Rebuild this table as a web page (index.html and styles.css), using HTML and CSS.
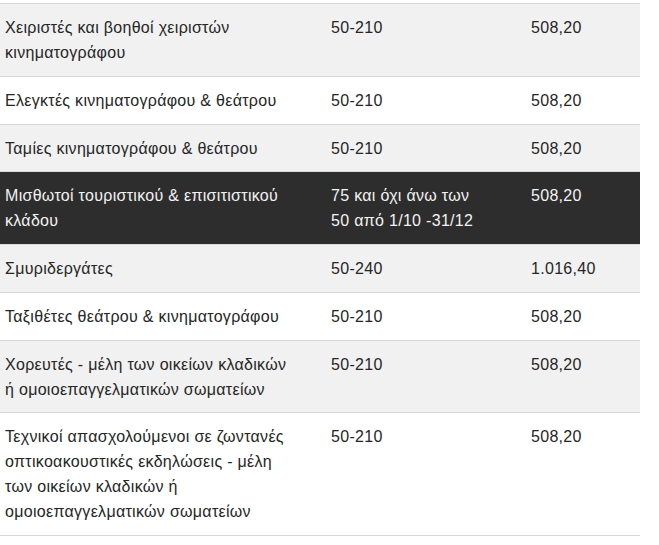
FILE: index.html
```html
<!DOCTYPE html>
<html lang="el">
<head>
<meta charset="utf-8">
<link rel="stylesheet" href="styles.css">
</head>
<body>
<table class="rates">
  <colgroup>
    <col class="c-job">
    <col class="c-days">
    <col class="c-amount">
  </colgroup>
  <tbody>
    <tr class="alt">
      <td class="job">Χειριστές και βοηθοί χειριστών κινηματογράφου</td>
      <td class="days">50-210</td>
      <td class="amount">508,20</td>
    </tr>
    <tr>
      <td class="job">Ελεγκτές κινηματογράφου &amp; θεάτρου</td>
      <td class="days">50-210</td>
      <td class="amount">508,20</td>
    </tr>
    <tr class="alt">
      <td class="job">Ταμίες κινηματογράφου &amp; θεάτρου</td>
      <td class="days">50-210</td>
      <td class="amount">508,20</td>
    </tr>
    <tr class="hl">
      <td class="job">Μισθωτοί τουριστικού &amp; επισιτιστικού κλάδου</td>
      <td class="days">75 και όχι άνω των 50 από 1/10 -31/12</td>
      <td class="amount">508,20</td>
    </tr>
    <tr class="alt">
      <td class="job">Σμυριδεργάτες</td>
      <td class="days">50-240</td>
      <td class="amount">1.016,40</td>
    </tr>
    <tr>
      <td class="job">Ταξιθέτες θεάτρου &amp; κινηματογράφου</td>
      <td class="days">50-210</td>
      <td class="amount">508,20</td>
    </tr>
    <tr class="alt">
      <td class="job">Χορευτές - μέλη των οικείων κλαδικών ή ομοιοεπαγγελματικών σωματείων</td>
      <td class="days">50-210</td>
      <td class="amount">508,20</td>
    </tr>
    <tr>
      <td class="job">Τεχνικοί απασχολούμενοι σε ζωντανές οπτικοακουστικές εκδηλώσεις - μέλη των οικείων κλαδικών ή ομοιοεπαγγελματικών σωματείων</td>
      <td class="days">50-210</td>
      <td class="amount">508,20</td>
    </tr>
  </tbody>
</table>
</body>
</html>
```
FILE: styles.css
```css
html, body {
  margin: 0;
  padding: 0;
  background: #ffffff;
}

body {
  font-family: "Liberation Sans", Arial, sans-serif;
  font-size: 16px;
  letter-spacing: 0.3px;
  color: #262626;
}

.rates {
  width: 640px;
  margin-top: 3px;
  border-collapse: collapse;
  table-layout: fixed;
  border-top: 1px solid #d8d8d8;
}

.c-job { width: 326px; }
.c-days { width: 200px; }
.c-amount { width: 114px; }

.rates td {
  vertical-align: top;
  padding: 11px 20px 10.75px 5px;
  line-height: 25px;
  border-bottom: 1px solid #d8d8d8;
}

.rates td.job {
  padding-right: 30px;
}

.rates td.days {
  padding-right: 44px;
}

.rates tr.alt td {
  background: #f1f1f1;
}

.rates tr.hl td {
  background: #2d2d2d;
  color: #f2f2f2;
}
```
